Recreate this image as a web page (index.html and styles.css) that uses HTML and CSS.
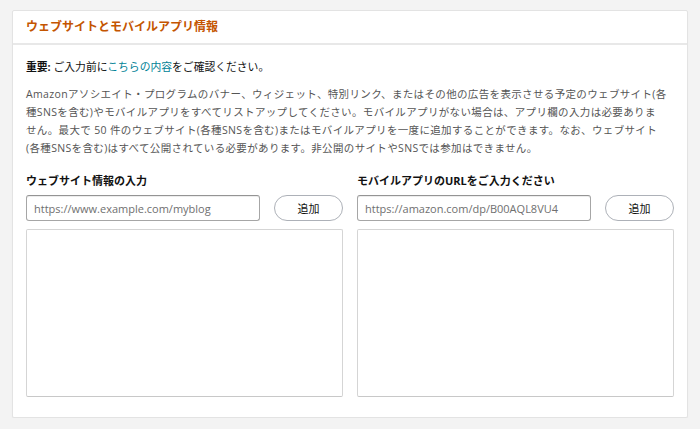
FILE: index.html
```html
<!DOCTYPE html>
<html lang="ja">
<head>
<meta charset="utf-8">
<title>ウェブサイトとモバイルアプリ情報</title>
<link rel="stylesheet" href="styles.css">
</head>
<body>
<section class="card">
  <header class="card-header">
    <h1 class="card-title">ウェブサイトとモバイルアプリ情報</h1>
  </header>
  <div class="card-body">
    <p class="notice"><strong>重要:</strong> ご入力前に<a class="link" href="#">こちらの内容</a>をご確認ください。</p>
    <p class="desc">Amazonアソシエイト・プログラムのバナー、ウィジェット、特別リンク、またはその他の広告を表示させる予定のウェブサイト(各<br>種SNSを含む)やモバイルアプリをすべてリストアップしてください。モバイルアプリがない場合は、アプリ欄の入力は必要ありま<br>せん。最大で 50 件のウェブサイト(各種SNSを含む)またはモバイルアプリを一度に追加することができます。なお、ウェブサイト<br>(各種SNSを含む)はすべて公開されている必要があります。非公開のサイトやSNSでは参加はできません。</p>
    <div class="columns">
      <div class="column">
        <h2 class="label">ウェブサイト情報の入力</h2>
        <div class="entry">
          <input class="field" type="text" placeholder="https://www.example.com/myblog">
          <button class="btn" type="button">追加</button>
        </div>
        <div class="list"></div>
      </div>
      <div class="column">
        <h2 class="label">モバイルアプリのURLをご入力ください</h2>
        <div class="entry">
          <input class="field" type="text" placeholder="https://amazon.com/dp/B00AQL8VU4">
          <button class="btn" type="button">追加</button>
        </div>
        <div class="list"></div>
      </div>
    </div>
  </div>
</section>
</body>
</html>
```

FILE: styles.css
```css
* { box-sizing: border-box; }
html, body { margin: 0; padding: 0; }
body {
  background: #f3f3f3;
  font-family: "Open Sans", "Noto Sans CJK JP", sans-serif;
  color: #111;
  padding: 10px 0 0 12px;
}
.card {
  width: 676px;
  background: #fff;
  border: 1px solid #e3e3e3;
  border-radius: 2px;
  box-shadow: 0 1px 1px rgba(0,0,0,0.05);
}
.card-header {
  height: 34px;
  border-bottom: 2px solid #e8e8e8;
  display: flex;
  align-items: center;
  padding: 0 13px;
}
.card-title {
  margin: 0;
  font-size: 12px;
  font-weight: 700;
  color: #c45500;
  line-height: 18px;
}
.card-body {
  padding: 13px 13px 20px;
}
.notice {
  margin: 0;
  font-size: 10.8px;
  line-height: 18px;
  color: #111;
}
.notice strong { font-weight: 700; }
.link { color: #008296; text-decoration: none; }
.desc {
  margin: 9px 0 0;
  font-size: 10.5px;
  letter-spacing: 0.35px;
  line-height: 18px;
  color: #555;
  white-space: nowrap;
}
.columns {
  display: grid;
  grid-template-columns: 1fr 1fr;
  gap: 14px;
  margin-top: 15px;
}
.label {
  margin: 0;
  font-size: 11px;
  font-weight: 700;
  line-height: 18px;
  color: #111;
}
.entry {
  display: flex;
  gap: 14px;
  margin-top: 5px;
}
.field {
  flex: 1;
  min-width: 0;
  height: 26px;
  border: 1px solid #a6a6a6;
  border-top-color: #949494;
  border-radius: 3px;
  box-shadow: inset 0 1px 0 rgba(0,0,0,0.07);
  padding: 0 7px;
  font-family: inherit;
  font-size: 11px;
  color: #111;
}
.field::placeholder { color: #6f6f6f; }
.btn {
  width: 69px;
  height: 26px;
  border: 1px solid #adb1b8;
  border-radius: 13px;
  background: #fff;
  font-family: inherit;
  font-size: 11px;
  color: #111;
  padding: 0;
}
.list {
  margin-top: 8px;
  height: 168px;
  border: 1px solid #d5d5d5;
  border-bottom-color: #c8c8c8;
  border-radius: 2px;
  background: #fff;
}
```
